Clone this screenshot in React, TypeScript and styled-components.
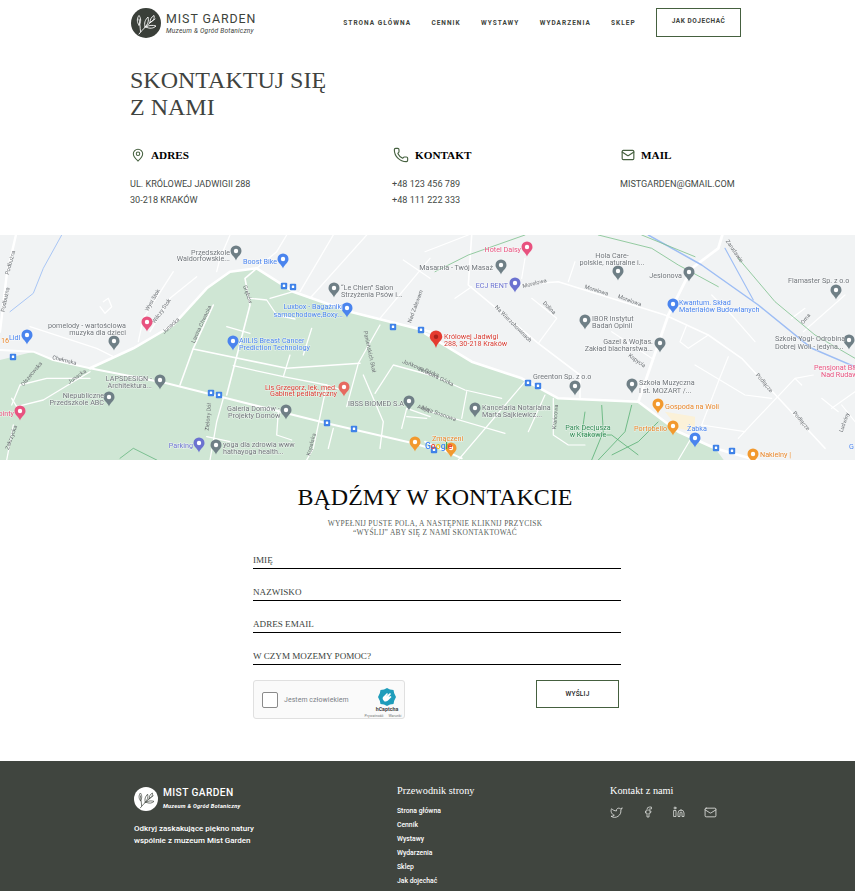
import React from 'react';
import styled, { createGlobalStyle } from 'styled-components';
import { MapPin, Phone, Mail, Twitter, Facebook, Linkedin } from 'lucide-react';

const Global = createGlobalStyle`
  html, body { margin: 0; padding: 0; background: #fff; }
  body { font-family: Roboto, "Liberation Sans", sans-serif; overflow: hidden; }
  * { box-sizing: border-box; }
`;

const Page = styled.div`width: 855px; height: 891px; overflow: hidden; display: flex; flex-direction: column;`;

const Header = styled.header`
  height: 46px; padding: 8px 114px 0 131px; display: flex; align-items: flex-start; justify-content: space-between;
`;
const Brand = styled.a<{ $footer?: boolean }>`
  display: flex; align-items: center; gap: 5px; color: ${p => (p.$footer ? '#fff' : '#3d433b')};
`;
const BrandText = styled.div`display: flex; flex-direction: column;`;
const BrandName = styled.span<{ $footer?: boolean }>`
  font-size: ${p => (p.$footer ? 10.2 : 12.4)}px; font-weight: ${p => (p.$footer ? 500 : 400)}; line-height: ${p => (p.$footer ? 13 : 15)}px;
  letter-spacing: ${p => (p.$footer ? 0.4 : 0.95)}px; white-space: nowrap;
`;
const BrandSub = styled.span<{ $footer?: boolean }>`
  font-size: ${p => (p.$footer ? 5.7 : 6.6)}px; font-style: italic; font-weight: ${p => (p.$footer ? 700 : 400)};
  line-height: 9px; margin-top: ${p => (p.$footer ? 3 : 1)}px; letter-spacing: 0.22px; white-space: nowrap;
`;
const Nav = styled.nav`display: flex; align-items: flex-start; gap: 20.3px;`;
const NavLink = styled.a`
  font-size: 6.5px; font-weight: 700; letter-spacing: 1.02px; color: #3d433b; text-transform: uppercase; line-height: 9px; margin-top: 11px; white-space: nowrap;
`;
const NavButton = styled.a`
  width: 85px; height: 29px; border: 1px solid #45603f; font-size: 6.5px; font-weight: 700; letter-spacing: .55px;
  color: #3d433b; display: flex; justify-content: center; padding-top: 8px; line-height: 9px; white-space: nowrap;
`;

const Contact = styled.section`padding: 21px 0 0 130px; height: 189px; flex: none;`;
const Title = styled.h1`
  margin: 0; font: 400 24px/27px "Liberation Serif", serif; color: #3f4340;
`;
const Columns = styled.div`
  display: grid; grid-template-columns: 262px 228px 1fr; margin-top: 26px;
`;
const Column = styled.div``;
const ColumnHead = styled.div`display: flex; align-items: center; gap: 6px; height: 16px; color: #45603f; margin-left: 1px;`;
const ColumnTitle = styled.h3`margin: 0; font: 700 11.2px/16px "Liberation Serif", serif; color: #000;`;
const ColumnText = styled.p`
  margin: 13px 0 0; font-size: 9.1px; line-height: 16px; color: #444a46; text-transform: uppercase; white-space: nowrap;
`;

const MapBox = styled.div`height: 225px; overflow: hidden; background: #f1f3f4; flex: none;`;
const MapSvg = styled.svg`display: block; filter: blur(0.6px);`;

const FormSection = styled.section`height: 301px; flex: none; display: flex; flex-direction: column; align-items: center; padding: 22px 0 0 15px;`;
const FormTitle = styled.h2`margin: 0; font: 400 24px/30px "Liberation Serif", serif; color: #0a0a0a; white-space: nowrap;`;
const FormSub = styled.p`
  margin: 7px 0 0; font: 400 7.45px/9px "Liberation Serif", serif; letter-spacing: .28px; color: #5a5f5c; text-align: center; text-transform: uppercase;
`;
const Form = styled.form`width: 368px; margin: 0 0 0 4px; display: flex; flex-direction: column;`;
const Field = styled.input`
  display: block; width: 100%; height: 32px; padding: 16px 0 1px 0; border: 0; border-bottom: 1.4px solid #000; background: transparent; outline: 0;
  font: 400 9.1px/13px "Liberation Serif", serif;
  &::placeholder { color: #3a3f3c; opacity: 1; }
`;
const FormBottom = styled.div`display: flex; justify-content: space-between; align-items: flex-start; margin-top: 15px; padding-right: 2px;`;
const Captcha = styled.div`
  position: relative; width: 152px; height: 39px; border: 1px solid #e0e0e0; border-radius: 3px; background: #fafafa; display: flex; align-items: center; padding-left: 8px; gap: 6px;
`;
const CaptchaBox = styled.span`width: 16px; height: 16px; border: 1px solid #8a8a8a; border-radius: 2px; background: #fff;`;
const CaptchaLabel = styled.span`font-size: 6.9px; color: #7a7f86; letter-spacing: .1px;`;
const CaptchaMark = styled.div`
  position: absolute; right: 0; top: 7px; width: 34px; display: flex; flex-direction: column; align-items: center;
`;
const CaptchaName = styled.span`font-size: 5.3px; font-weight: 700; color: #444; line-height: 7px;`;
const CaptchaLinks = styled.span`font-size: 3.6px; color: #777; line-height: 6px; display: flex; gap: 5px; white-space: nowrap; margin-left: -8px;`;
const SendButton = styled.button`
  width: 83px; height: 28px; border: 1px solid #45603f; background: #fff; font-family: Roboto, sans-serif; font-size: 6.6px; font-weight: 500; color: #222; letter-spacing: .2px; padding: 0;
`;

const Footer = styled.footer`
  flex: none; height: 130px; background: #40453f; color: #fff; display: grid; grid-template-columns: 263px 213px 1fr; padding: 0 0 0 134px; overflow: hidden;
`;
const FooterCol = styled.div<{ $top: number }>`padding-top: ${p => p.$top}px;`;
const FooterAbout = styled.p`margin: 12px 0 0; font-size: 8px; font-weight: 500; line-height: 12px; white-space: nowrap;`;
const FooterHead = styled.h4`margin: 0; font: 400 10.3px/14px "Liberation Serif", serif; color: #fff;`;
const FooterLinks = styled.ul`list-style: none; margin: 6px 0 0; padding: 0; display: flex; flex-direction: column;`;
const FooterLink = styled.li`font-size: 6.8px; font-weight: 500; line-height: 14px; color: #fff;`;
const Socials = styled.div`display: flex; gap: 19px; margin-top: 8px; color: #e6e8e5;`;

const Twig: React.FC<{ size: number; light?: boolean }> = ({ size, light }) => {
  const bg = light ? '#fff' : '#3a3f39';
  const fg = light ? '#40453f' : '#fff';
  return (
    <svg width={size} height={size} viewBox="0 0 30 30" style={{ flex: 'none' }}>
      <circle cx="15" cy="15" r="15" fill={bg} />
      <g fill="none" stroke={fg} strokeWidth="0.9" strokeLinecap="round">
        <path d="M8 26 C12 21 17 16 24 11" />
        <path d="M9.500 23.500 C9 19 9 15 8 11" />
        <path d="M8 17 C5.500 14 6 10 8 7.500 C10 10 10.500 14 8 17Z" />
        <path d="M14 19 C13 15 14 12 17 9 C18 13 17 16 14 19Z" />
        <path d="M19 14.500 C19 11 20.500 9 23 7.500 C24 10.500 22 13 19 14.500Z" />
        <path d="M15 19 C18 17 22 17 25 18 C22.500 20.500 18.500 21 15 19Z" />
      </g>
    </svg>
  );
};

const W = 855;
const R = (x: number) => x / 3;
const Rx = (x: number) => x / 3 + 425;
const path = (pts: [number, number][], right?: boolean) =>
  pts.map(([x, y], i) => `${i ? 'L' : 'M'}${(right ? Rx(x) : R(x)).toFixed(1)} ${R(y).toFixed(1)}`).join(' ');

const mainA = path([[270,400],[400,340],[520,270],[620,160],[690,110],[770,100],[880,170],[1050,230],[1290,290]]);
const mainA2 = path([[0,295],[140,380],[290,430],[400,490],[640,500],[760,590],[870,640],[1010,680]], true);
const mainB = path([[0,345],[100,350],[160,375],[270,400],[500,445],[680,490],[980,565],[1240,625],[1290,640]]);
const mainB2 = path([[0,620],[110,670]], true);
const mainC = path([[640,500],[730,240],[800,100],[880,40],[895,-10]], true);
const topL = path([[0,290],[20,120],[50,-10]]);
const green = [
  path([[0,375],[100,350],[160,375],[270,400],[400,340],[520,270],[620,160],[690,110],[770,100],[880,170],[1050,230],[1290,290]]),
  path([[0,295],[140,380],[290,430],[400,490],[640,500],[760,590],[870,640],[900,680]], true).replace('M', 'L'),
  `L0 225 Z`,
].join(' ');

const minorL: [number, number][][] = [
  [[540,450],[580,340],[640,210]], [[580,342],[860,400],[1080,385]], [[680,480],[750,210],[735,130],[770,100]],
  [[700,392],[850,425],[980,450],[1040,470]], [[850,425],[870,360]], [[910,360],[935,280]], [[750,190],[800,195],[830,240],[885,252]],
  [[810,190],[880,170]], [[680,275],[750,295]], [[1040,515],[1075,385],[1140,270]], [[1090,420],[1150,560],[1140,640]],
  [[1125,475],[1180,390],[1290,420]], [[980,450],[940,640],[920,675]], [[630,675],[650,560],[670,490]], [[620,605],[690,620]],
  [[835,530],[830,600],[875,615]], [[35,510],[60,450],[140,430],[270,430]], [[35,490],[50,515],[130,495],[270,410]],
  [[40,570],[20,675]], [[1000,580],[985,640]], [[90,275],[290,340],[340,365]], [[415,320],[430,250],[520,110]],
  [[450,290],[510,190],[590,125]], [[1205,580],[1220,520],[1290,545]], [[1220,545],[1280,550]], [[860,0],[830,50],[770,100]],
  [[900,170],[1000,0]], [[930,190],[1100,0]], [[1140,250],[1290,70]], [[650,110],[660,70],[690,0]], [[310,200],[325,190],[335,215],[315,235],[300,215]],
  [[1210,75],[1290,130]],
];
const minorR: [number, number][][] = [
  [[140,0],[130,150],[340,325],[465,420],[465,490]], [[270,150],[400,140],[720,240],[850,300],[950,370],[1200,640]],
  [[340,325],[395,250],[320,190]], [[140,155],[90,190]], [[430,140],[450,80]], [[290,130],[300,70]], [[560,290],[680,370]],
  [[850,300],[790,340],[765,320],[785,270]], [[910,365],[880,440],[830,570]], [[810,390],[960,480],[1040,490]], [[830,570],[960,590]],
  [[940,610],[1110,430]], [[130,0],[0,50]], [[990,320],[920,240],[860,180]], [[1135,290],[1260,180]], [[1100,250],[1140,220]],
  [[100,675],[300,440]], [[0,410],[120,465],[230,490]], [[0,525],[240,595]], [[110,550],[125,470]], [[310,590],[360,480]],
  [[385,490],[385,600],[430,630],[480,630]], [[1190,490],[1240,530]], [[1250,510],[1290,560]], [[760,675],[810,590]],
  [[1290,470],[1220,520]], [[1165,420],[1110,430],[1130,450]],
];

type Lb = [number, number, string, string?, ('start' | 'middle' | 'end')?];
const C = { g: '#70757a', b: '#4a84ee', p: '#e8527f', r: '#d93a30', o: '#e8862a', v: '#6b72d0', d: '#2d8a52' };
const labels: Lb[] = [
  [230,20,'Przedszkole',C.g,'end'],[230,26,'Waldorfowskie...',C.g,'end'],[243,29,'Boost Bike',C.b],[341,55,'“Le Chien” Salon',C.g],[341,62,'Strzyżenia Psów i...',C.g],
  [343,74,'Luxbox - Bagażniki',C.b,'end'],[343,82,'samochodowe,Boxy...',C.b,'end'],[126,93,'pomelody - wartościowa',C.g,'end'],[126,100,'muzyka dla dzieci',C.g,'end'],
  [9,105,'Lidl',C.b],[1,108,'16',C.o],[239,108,'AIILIS Breast Cancer',C.b],[239,115,'Prediction Technology',C.b],[337,155,'Lis Grzegorz, lek. med.',C.r,'end'],[337,161,'Gabinet pediatryczny',C.r,'end'],
  [152,146,'LAPSDESIGN -',C.g,'end'],[152,153,'Architektura...',C.g,'end'],[104,163,'Niepubliczne',C.g,'end'],[104,170,'Przedszkole ABC',C.g,'end'],[14,181,'ointy',C.p,'end'],
  [227,176,'Galeria Domów -',C.g],[228,183,'Projekty Domów',C.g],[348,171,'IBSS BIOMED S.A',C.g],[193,213,'Parking',C.v,'end'],[223,212,'yoga dla zdrowia www',C.g],[223,219,'hathayoga health...',C.g],
  [521,17,'Hotel Daisy',C.p,'end'],[493,35,'Masarnia - Twój Masaż',C.g,'end'],[612,23,'Hola Care-',C.g,'middle'],[612,30,'polskie, naturalne i...',C.g,'middle'],[682,43,'Jesionova',C.g,'end'],
  [508,53,'ECJ RENT',C.v,'end'],[788,48,'Flamaster Sp. z o.o',C.g],[679,70,'Kwantum. Skład',C.b],[679,77,'Materiałów Budowlanych',C.b],[592,86,'IBOR Instytut',C.g],[592,93,'Badań Opinii',C.g],
  [653,109,'Gazel & Wojtas.',C.g,'end'],[653,116,'Zakład blacharstwa...',C.g,'end'],[444,104,'Królowej Jadwigi',C.r],[444,111,'288, 30-218 Kraków',C.r],[775,106,'Szkoła Yogi- Odrobina',C.g],[775,114,'Dobrej Woli - jedyna...',C.g],
  [814,135,'Pensjonat B&B',C.p],[821,142,'Nad Rudawą',C.p],[533,144,'Greenton Sp. z o.o',C.g],[639,150,'Szkoła Muzyczna',C.g],[639,158,'I st. MOZART /...',C.g],[665,174,'Gospoda na Woli',C.o],
  [482,175,'Kancelaria Notarialna',C.g],[482,182,'Marta Sajkiewicz...',C.g],[588,195,'Park Decjusza',C.d,'middle'],[588,202,'w Krakowie',C.d,'middle'],[667,196,'Portobello',C.o,'end'],[697,196,'Żabka',C.b,'middle'],
  [432,206,'Zmączeni',C.o],[760,222,'Nakielny |',C.o],[849,214,'G',C.b],
];
const streets: [number, number, string, number][] = [
  [12,28,'Podbużna',-75],[7,65,'Podbużna',-78],[154,66,'Wysi Stok',-60],[163,77,'Wilczy Stok',-55],[172,92,'Junacka',-42],[203,90,'Lanina Chwacka',-65],[246,60,'Grębów',72],
  [64,127,'Chełmska',14],[78,143,'Junacka',-35],[33,140,'Olszecwska',-50],[210,182,'Zielony Dół',-85],[417,72,'Nad Zalewem',-70],[368,117,'Panieńskich Skał',78],[420,135,'Jońkowa Górka',22],
  [313,210,'Kopalska',-75],[13,203,'Zakrzycka',-70],[423,175,'Alaja',18],[535,50,'Morelowa',-14],[596,57,'Morelowa',18],[629,67,'Morelowa',20],[548,74,'Dolina',45],[512,90,'Na Wierzchowinach',45],
  [636,127,'Kopycia',35],[557,182,'Krańcowa',-85],[763,149,'Podłącze',50],[800,187,'Podłącze',50],[733,17,'Zarudawie',55],[807,85,'Orna',-50],[846,188,'Ludwiny',-70],[435,143,'Jońkowa Górka',25],[438,180,'Alaja Sosnowa',20],
];
type Pn = [number, number, string];
const pins: Pn[] = [
  [236,18,'#6f7f86'],[283,26,'#4a84ee'],[334,55,'#6f7f86'],[347,75,'#4a84ee'],[147,89,'#e8527f'],[114,108,'#6f7f86'],[27,102,'#4a84ee'],[233,108,'#4a84ee'],[344,154,'#e66a60'],
  [160,147,'#6f7f86'],[109,164,'#6f7f86'],[20,178,'#e8527f'],[286,177,'#6f7f86'],[409,168,'#6f7f86'],[415,209,'#f2992e'],[199,210,'#6b72d0'],[216,212,'#6f7f86'],
  [527,14,'#e8527f'],[501,32,'#6f7f86'],[618,38,'#6f7f86'],[689,39,'#6f7f86'],[515,50,'#6b72d0'],[836,57,'#6f7f86'],[673,71,'#4a84ee'],[585,87,'#6f7f86'],[660,110,'#6f7f86'],[849,107,'#6f7f86'],
  [575,153,'#6f7f86'],[632,151,'#6f7f86'],[658,171,'#f2992e'],[475,175,'#6f7f86'],[673,193,'#f2992e'],[695,205,'#4a84ee'],[451,215,'#f2992e'],[753,221,'#f2992e'],
];
const buses: [number, number][] = [[284,51],[293,52],[393,92],[421,95],[13,122],[211,158],[219,160],[327,188],[354,194],[528,148],[538,151],[716,213],[732,216],[434,215]];

const Line: React.FC<{ d: string; w: number; c?: string }> = ({ d, w, c = '#fff' }) => (
  <path d={d} fill="none" stroke={c} strokeWidth={w} strokeLinejoin="round" strokeLinecap="round" />
);

const MapArt: React.FC = () => (
  <MapSvg width={W} height={225} viewBox={`0 0 ${W} 225`} fontFamily="Roboto, sans-serif">
    <rect width={W} height={225} fill="#f1f3f4" />
    <path d={green} fill="#cfe6d4" />
    <path d={path([[720,530],[810,545],[810,590],[760,580]], true) + ' Z'} fill="#fbf1d8" />
    <Line d={path([[30,230],[100,175],[130,100],[185,0]])} w={1} c="#a9c6f5" />
    {minorL.map((p, i) => <Line key={i} d={path(p)} w={i < 3 ? 1.6 : 1.3} />)}
    {minorR.map((p, i) => <Line key={i} d={path(p, true)} w={i < 2 ? 1.6 : 1.2} />)}
    <Line d={topL} w={2.4} />
    <Line d={mainA} w={2.6} />
    <Line d={mainA2} w={2.6} />
    <Line d={mainB} w={2} />
    <Line d={mainB2} w={2} />
    <Line d={mainC} w={2.8} />
    <Line d={path([[670,0],[830,90],[1000,210],[1160,340],[1290,395]], true)} w={1.5} c="#9dbdf4" />
    <Line d={path([[900,40],[985,195]], true)} w={1.1} c="#9dbdf4" />
    <Line d={path([[520,0],[680,40],[760,90],[880,155]], true)} w={0.8} c="#7cc08c" />
    <Line d={path([[30,110],[130,60],[300,0]], true)} w={0.8} c="#7cc08c" />
    <Line d={path([[650,0],[810,65]], true)} w={0.8} c="#7cc08c" />
    <Line d={path([[940,70],[1050,200],[1170,300],[1290,370]], true)} w={0.8} c="#7cc08c" />
    <g fill="none" stroke="#58b074" strokeWidth="0.8">
      <path d={path([[530,510],[535,590],[500,675]], true)} />
      <path d={path([[620,510],[600,590],[520,675]], true)} />
      <path d={path([[480,530],[470,600],[560,600],[640,660]], true)} />
      <path d={path([[700,560],[640,620],[560,660]], true)} />
    </g>
    <Line d={path([[360,670],[400,640],[470,675]])} w={0.7} c="#58b074" />
    {streets.map(([x, y, t, r], i) => (
      <text key={i} x={x} y={y} fontSize="5.6" fill="#6d7175" textAnchor="middle" transform={`rotate(${r} ${x} ${y})`}>{t}</text>
    ))}
    {buses.map(([x, y], i) => (
      <g key={i}>
        <rect x={x - 3.2} y={y - 3.2} width="6.4" height="6.4" rx="1" fill="#3f82e8" />
        <rect x={x - 1.2} y={y - 1.4} width="2.4" height="2.4" rx="0.5" fill="#fff" />
      </g>
    ))}
    {pins.map(([x, y, c], i) => (
      <g key={i} transform={`translate(${x} ${y})`}>
        <path d="M0 7.500C-1.200 3.500-5.500 2-5.500-2a5.500 5.500 0 1 1 11 0C5.500 2 1.200 3.500 0 7.500Z" fill={c} />
        <circle cy="-2" r="2.200" fill="#fff" />
      </g>
    ))}
    <g transform="translate(436 104)">
      <path d="M0 9C-1.500 3-6.300 1.500-6.300-2.300a6.300 6.300 0 1 1 12.600 0C6.300 1.500 1.500 3 0 9Z" fill="#e53b30" />
      <circle cy="-2.300" r="2.200" fill="#a8221c" />
    </g>
    {labels.map(([x, y, t, c, a], i) => (
      <text key={i} x={x} y={y} fontSize="7.2" fill={c} textAnchor={a ?? 'start'} stroke="#fff" strokeOpacity=".6" strokeWidth="1" paintOrder="stroke">{t}</text>
    ))}
    <text x="425" y="214" fontSize="8.6" fontWeight="500">
      <tspan fill="#4285f4">G</tspan><tspan fill="#ea4335">o</tspan><tspan fill="#fbbc05">o</tspan><tspan fill="#4285f4">g</tspan><tspan fill="#34a853">l</tspan><tspan fill="#ea4335">e</tspan>
    </text>
  </MapSvg>
);

const HCaptchaLogo: React.FC = () => (
  <svg width="18" height="18" viewBox="0 0 18 18">
    <path d="M9 0l3 1.500 3.500.5.7 3.300L18 9l-1.800 3.700-.7 3.300-3.500.5L9 18l-3-1.500-3.500-.5-.7-3.300L0 9l1.800-3.700.7-3.300L6 1.500Z" fill="#1f9dbb" />
    <path d="M6 13c-2-2-1.500-3.500-.5-4.500L9 5l1 1-2 2.500L12 5l1 1-2.500 3 2-1 1 1-3 3c-1.500 1.500-3.500 2-4.500 1Z" fill="#fff" />
  </svg>
);

const App: React.FC = () => (
  <Page>
    <Global />
    <Header>
      <Brand>
        <Twig size={30} />
        <BrandText>
          <BrandName>MIST GARDEN</BrandName>
          <BrandSub>Muzeum &amp; Ogród Botaniczny</BrandSub>
        </BrandText>
      </Brand>
      <Nav>
        <NavLink>Strona główna</NavLink>
        <NavLink>Cennik</NavLink>
        <NavLink>Wystawy</NavLink>
        <NavLink>Wydarzenia</NavLink>
        <NavLink>Sklep</NavLink>
        <NavButton>JAK DOJECHAĆ</NavButton>
      </Nav>
    </Header>

    <Contact>
      <Title>SKONTAKTUJ SIĘ<br />Z NAMI</Title>
      <Columns>
        <Column>
          <ColumnHead><MapPin size={14} strokeWidth={1.8} /><ColumnTitle>ADRES</ColumnTitle></ColumnHead>
          <ColumnText>ul. Królowej Jadwigii 288<br />30-218 Kraków</ColumnText>
        </Column>
        <Column>
          <ColumnHead><Phone size={16} strokeWidth={1.7} /><ColumnTitle>KONTAKT</ColumnTitle></ColumnHead>
          <ColumnText>+48 123 456 789<br />+48 111 222 333</ColumnText>
        </Column>
        <Column>
          <ColumnHead><Mail size={14} strokeWidth={2} /><ColumnTitle>MAIL</ColumnTitle></ColumnHead>
          <ColumnText>mistgarden@gmail.com</ColumnText>
        </Column>
      </Columns>
    </Contact>

    <MapBox><MapArt /></MapBox>

    <FormSection>
      <FormTitle>BĄDŹMY W KONTAKCIE</FormTitle>
      <FormSub>Wypełnij puste pola, a następnie kliknij przycisk<br />“Wyślij” aby się z nami skontaktować</FormSub>
      <Form>
        <Field placeholder="IMIĘ" />
        <Field placeholder="NAZWISKO" />
        <Field placeholder="ADRES EMAIL" />
        <Field placeholder="W CZYM MOZEMY POMOC?" />
        <FormBottom>
          <Captcha>
            <CaptchaBox />
            <CaptchaLabel>Jestem człowiekiem</CaptchaLabel>
            <CaptchaMark>
              <HCaptchaLogo />
              <CaptchaName>hCaptcha</CaptchaName>
              <CaptchaLinks><span>Prywatność</span><span>Warunki</span></CaptchaLinks>
            </CaptchaMark>
          </Captcha>
          <SendButton type="button">WYŚLIJ</SendButton>
        </FormBottom>
      </Form>
    </FormSection>

    <Footer>
      <FooterCol $top={25}>
        <Brand $footer>
          <Twig size={24} light />
          <BrandText>
            <BrandName $footer>MIST GARDEN</BrandName>
            <BrandSub $footer>Muzeum &amp; Ogród Botaniczny</BrandSub>
          </BrandText>
        </Brand>
        <FooterAbout>Odkryj zaskakujące piękno natury<br />wspólnie z muzeum Mist Garden</FooterAbout>
      </FooterCol>
      <FooterCol $top={23}>
        <FooterHead>Przewodnik strony</FooterHead>
        <FooterLinks>
          <FooterLink>Strona główna</FooterLink>
          <FooterLink>Cennik</FooterLink>
          <FooterLink>Wystawy</FooterLink>
          <FooterLink>Wydarzenia</FooterLink>
          <FooterLink>Sklep</FooterLink>
          <FooterLink>Jak dojechać</FooterLink>
        </FooterLinks>
      </FooterCol>
      <FooterCol $top={23}>
        <FooterHead>Kontakt z nami</FooterHead>
        <Socials>
          <Twitter size={13} strokeWidth={1.5} />
          <Facebook size={12} strokeWidth={1.5} />
          <Linkedin size={12} strokeWidth={1.5} />
          <Mail size={13} strokeWidth={1.5} />
        </Socials>
      </FooterCol>
    </Footer>
  </Page>
);

export default App;
